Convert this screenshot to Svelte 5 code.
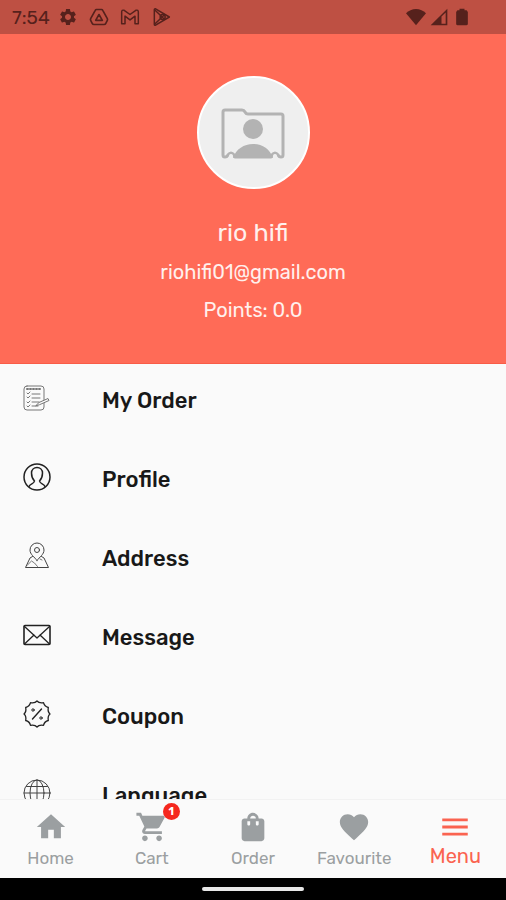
<script lang="ts">
  type Item = { id: string; label: string };

  const menu: Item[] = [
    { id: 'order', label: 'My Order' },
    { id: 'profile', label: 'Profile' },
    { id: 'address', label: 'Address' },
    { id: 'message', label: 'Message' },
    { id: 'coupon', label: 'Coupon' },
    { id: 'language', label: 'Language' },
  ];

  const tabs = [
    { label: 'Home', path: 'M10 20v-6h4v6h5v-8h3L12 3 2 12h3v8z' },
    {
      label: 'Cart',
      badge: 1,
      path: 'M7 18c-1.1 0-1.99.9-1.99 2S5.9 22 7 22s2-.9 2-2-.9-2-2-2zM1 2v2h2l3.6 7.59-1.35 2.45c-.16.28-.25.61-.25.96 0 1.1.9 2 2 2h12v-2H7.42c-.14 0-.25-.11-.25-.25l.03-.12.9-1.63h7.45c.75 0 1.41-.41 1.75-1.03l3.58-6.49c.08-.14.12-.31.12-.48 0-.55-.45-1-1-1H5.21l-.94-2H1zm16 16c-1.1 0-1.99.9-1.99 2s.89 2 1.99 2 2-.9 2-2-.9-2-2-2z',
    },
    {
      label: 'Order',
      path: 'M18 6h-2c0-2.21-1.79-4-4-4S8 3.79 8 6H6c-1.1 0-2 .9-2 2v12c0 1.1.9 2 2 2h12c1.1 0 2-.9 2-2V8c0-1.1-.9-2-2-2zm-8 4c0 .55-.45 1-1 1s-1-.45-1-1V8h2v2zm2-6c1.1 0 2 .9 2 2h-4c0-1.1.9-2 2-2zm4 6c0 .55-.45 1-1 1s-1-.45-1-1V8h2v2z',
    },
    {
      label: 'Favourite',
      path: 'M12 21.35l-1.45-1.32C5.4 15.36 2 12.28 2 8.5 2 5.42 4.42 3 7.5 3c1.74 0 3.41.81 4.5 2.09C13.09 3.81 14.76 3 16.5 3 19.58 3 22 5.42 22 8.5c0 3.78-3.4 6.86-8.55 11.54L12 21.35z',
    },
    { label: 'Menu', path: 'M3 18h18v-2H3v2zm0-5h18v-2H3v2zm0-7v2h18V6H3z' },
  ];

  let active = $state('Menu');
</script>

<div class="app">
  <div class="status">
    <span class="time">7:54</span>
    <div class="notifications">
      <svg class="status-icon" viewBox="0 0 24 24" fill="currentColor">
        <path d="M19.14 12.94c.04-.3.06-.61.06-.94 0-.32-.02-.64-.07-.94l2.03-1.58c.18-.14.23-.41.12-.61l-1.92-3.32c-.12-.22-.37-.29-.59-.22l-2.39.96c-.5-.38-1.03-.7-1.62-.94l-.36-2.54c-.04-.24-.24-.41-.48-.41h-3.84c-.24 0-.43.17-.47.41l-.36 2.54c-.59.24-1.13.57-1.62.94l-2.39-.96c-.22-.08-.47 0-.59.22L2.74 8.87c-.12.21-.08.47.12.61l2.03 1.58c-.05.3-.09.63-.09.94s.02.64.07.94l-2.03 1.58c-.18.14-.23.41-.12.61l1.92 3.32c.12.22.37.29.59.22l2.39-.96c.5.38 1.03.7 1.62.94l.36 2.54c.05.24.24.41.48.41h3.84c.24 0 .44-.17.47-.41l.36-2.54c.59-.24 1.13-.56 1.62-.94l2.39.96c.22.08.47 0 .59-.22l1.92-3.32c.12-.22.07-.47-.12-.61l-2.01-1.58zM12 15.6c-1.98 0-3.6-1.62-3.6-3.6s1.62-3.6 3.6-3.6 3.6 1.62 3.6 3.6-1.62 3.6-3.6 3.6z" />
      </svg>
      <svg class="status-icon" viewBox="0 0 24 24" fill="none" stroke="currentColor" stroke-width="2" stroke-linejoin="round">
        <path d="M9 3h6q1 0 1.500 1L22 14q.5 1 0 2l-2 4q-.5 1-2 1H6q-1.500 0-2-1l-2-4q-.5-1 0-2L7.500 4Q8 3 9 3z" />
        <path d="M12 9l4 7H8z" />
      </svg>
      <svg class="status-icon" viewBox="0 0 24 24" fill="none" stroke="currentColor" stroke-width="1.8" stroke-linejoin="round">
        <path d="M2 20V6q0-3 3-2l7 5 7-5q3-1 3 2v14h-4v-9l-6 4.500L6 11v9z" />
      </svg>
      <svg class="status-icon" viewBox="0 0 24 24" fill="none" stroke="currentColor" stroke-width="1.8" stroke-linejoin="round">
        <path d="M4 3q0-1 1-1l17 10L5 22q-1 0-1-1z" />
        <path d="M4 3l12.500 12M4 21L16.500 9" />
        <circle cx="14" cy="12" r="3" />
      </svg>
    </div>
    <div class="signals">
      <svg class="status-icon" viewBox="0 0 24 24" fill="currentColor">
        <path d="M12 22L0 7.500C3 4.500 7.500 2.500 12 2.500S21 4.500 24 7.500z" />
      </svg>
      <svg class="status-icon" viewBox="0 0 24 24" fill="currentColor">
        <path fill-rule="evenodd" d="M2 22L22 2v20zM15 11.500V20h5V6.500z" />
      </svg>
      <svg class="status-icon" viewBox="0 0 24 24" fill="currentColor">
        <path d="M9 2h6v2h2.500l1.500 2v15l-1.500 1h-11L5 21V6l1.500-2H9z" />
      </svg>
    </div>
  </div>

  <header class="account">
    <div class="avatar">
      <svg viewBox="0 0 64 52">
        <path d="M2 48V5q0-2 2-2h17q2 0 3 2t3 2h33q2 0 2 2v39q0 2-2 2-2 0-3-2-3-4-6 0l-1 2H14l-1-2q-3-4-6 0-1 2-3 2t-2-2z" fill="none" stroke="#b3b3b3" stroke-width="3" stroke-linejoin="round" />
        <circle cx="32" cy="22" r="10" fill="#b3b3b3" />
        <path d="M12 51c3-9 11-14 20-14s17 5 20 14z" fill="#b3b3b3" />
        <circle cx="10" cy="49" r="2" fill="#efefef" />
        <circle cx="54" cy="49" r="2" fill="#efefef" />
      </svg>
    </div>
    <h1>rio hifi</h1>
    <p>riohifi01@gmail.com</p>
    <p>Points: 0.0</p>
  </header>

  <main class="menu">
    {#each menu as item (item.id)}
      <a class="row" href="#{item.id}">
        <svg class="row-icon" viewBox="0 0 28 28" fill="none" stroke="#222" stroke-linejoin="round" stroke-linecap="round">
          {#if item.id === 'order'}
            <g stroke="#777">
              <rect x="1" y="2" width="20" height="24" rx="3" />
              <path d="M4 5h14" stroke-width="2" stroke-dasharray="1 2" />
              <path d="M9 10h8M9 14h8M9 18h7M9 22h6" />
              <path d="M4 9l1 1 2-2M4 13l1 1 2-2M4 18l1 1 2-2M4 22l1 1 2-2" />
              <path d="M13 21.500l3-3 9-4 1 2-9 4z" fill="#fafafa" />
            </g>
          {:else if item.id === 'profile'}
            <circle cx="14" cy="14" r="13" stroke-width="1.500" />
            <path d="M6 23.500c1-3 5-2.500 5.500-5.500-2-2-3-4.500-3-8 0-3.500 2.500-5.500 5.500-5.500s5.500 2 5.500 5.500c0 3.500-1 6-3 8 .5 3 4.500 2.500 5.500 5.500" stroke-width="1.500" />
          {:else if item.id === 'address'}
            <g stroke="#444">
              <path d="M14 18.500c-2.500-3.500-7-6-7-10.500a7 7 0 0 1 14 0c0 4.500-4.500 7-7 10.500z" />
              <circle cx="14" cy="8" r="2.500" />
              <path d="M9.500 14.500L7 16 2.500 25.500h23L21 16l-2.500-1.500" />
              <path d="M4.500 23l4-4 3 2 3 3.500M17 17l2 1" stroke="#777" />
            </g>
          {:else if item.id === 'message'}
            <rect x="1" y="4.500" width="26" height="19" rx="1" stroke-width="1.600" />
            <path d="M1.500 5.500L14 17 26.500 5.500M1.500 23l9.500-9M26.500 23L17 14" stroke-width="1.300" />
          {:else if item.id === 'coupon'}
            <path d="M14 1q2 2.500 6.500 1.700Q21.500 6.500 25.300 7.500 24.500 12 27 14q-2.500 2-1.700 6.500-3.800 1-4.800 4.800Q16 24.500 14 27q-2-2.500-6.500-1.700-1-3.800-4.800-4.800Q3.500 16 1 14q2.500-2 1.700-6.500 3.800-1 4.800-4.800Q12 3.500 14 1z" stroke-width="1.300" />
            <path d="M18.500 9L9.500 19" stroke-width="1.400" />
            <circle cx="10" cy="10" r="1.200" />
            <circle cx="18" cy="18" r="1.200" />
          {:else}
            <g stroke="#444">
              <circle cx="14" cy="14" r="13" />
              <ellipse cx="14" cy="14" rx="7" ry="13" />
              <path d="M14 1v26M1 14h26M3.500 7.500h21M3.500 20.500h21" />
            </g>
          {/if}
        </svg>
        <span>{item.label}</span>
      </a>
    {/each}
  </main>

  <nav class="tabs">
    {#each tabs as tab (tab.label)}
      <button
        type="button"
        class="tab"
        class:active={active === tab.label}
        onclick={() => (active = tab.label)}
      >
        <span class="tab-icon">
          <svg viewBox="0 0 24 24" fill="currentColor"><path d={tab.path} /></svg>
          {#if tab.badge}
            <span class="badge">{tab.badge}</span>
          {/if}
        </span>
        <span class="tab-label">{tab.label}</span>
      </button>
    {/each}
  </nav>

  <div class="gesture"><span class="pill"></span></div>
</div>

<style>
  :global(body) {
    margin: 0;
    background: #fafafa;
  }
  .app {
    height: 100vh;
    display: flex;
    flex-direction: column;
    background: #fafafa;
    font-family: 'Rubik', 'Roboto', sans-serif;
    color: #181818;
  }
  .status {
    flex: none;
    display: flex;
    align-items: center;
    gap: 8px;
    height: 34px;
    padding: 0 34px 0 12px;
    box-sizing: border-box;
    background: #be5043;
    color: #56211c;
  }
  .time {
    font-size: 19px;
  }
  .status-icon {
    display: block;
    width: 20px;
    height: 20px;
  }
  .notifications {
    display: flex;
    gap: 11px;
  }
  .signals {
    display: flex;
    gap: 3px;
    margin-left: auto;
  }
  .account {
    flex: none;
    display: flex;
    flex-direction: column;
    align-items: center;
    padding: 42px 16px 34px;
    background: #ff6b57;
    border-bottom: 1px solid #f95c47;
    color: #fff0ed;
  }
  .avatar {
    display: grid;
    place-items: center;
    width: 109px;
    height: 109px;
    border: 2px solid #fff;
    border-radius: 50%;
    background: #efefef;
  }
  .avatar svg {
    width: 64px;
    height: 52px;
  }
  h1 {
    margin: 25px 0 1px;
    font-size: 25px;
    font-weight: 400;
    line-height: 38px;
  }
  .account p {
    margin: 0;
    font-size: 20px;
    line-height: 38px;
  }
  .menu {
    flex: 1;
    min-height: 0;
    overflow-y: auto;
    scrollbar-width: none;
    display: flex;
    flex-direction: column;
    gap: 7px;
  }
  .row {
    flex: none;
    display: flex;
    align-items: center;
    gap: 51px;
    height: 72px;
    padding: 0 23px;
    color: inherit;
    font-size: 22px;
    font-weight: 500;
    text-decoration: none;
  }
  .row-icon {
    width: 28px;
    height: 28px;
    margin-bottom: 4px;
  }
  .tabs {
    flex: none;
    display: flex;
    height: 79px;
    border-top: 1px solid #f2f2f2;
    box-sizing: border-box;
  }
  .tab {
    flex: 1 1 0;
    min-width: 0;
    display: flex;
    flex-direction: column;
    align-items: center;
    gap: 4px;
    padding: 10px 0 0;
    border: 0;
    background: none;
    color: #9b9fa1;
    font-family: inherit;
    font-size: 17px;
    line-height: 20px;
    cursor: pointer;
  }
  .tab.active {
    gap: 2px;
    color: #fa6350;
    font-size: 20px;
  }
  .tab-icon {
    position: relative;
    height: 34px;
  }
  .tab-icon svg {
    display: block;
    width: 34px;
    height: 34px;
  }
  .badge {
    position: absolute;
    top: -7px;
    right: -11px;
    width: 17px;
    height: 17px;
    border-radius: 50%;
    background: #f5281e;
    color: #fff;
    font-size: 11px;
    font-weight: 700;
    line-height: 17px;
    text-align: center;
  }
  .gesture {
    flex: none;
    display: grid;
    place-items: center;
    height: 22px;
    background: #000;
  }
  .pill {
    width: 20%;
    height: 4px;
    border-radius: 2px;
    background: #e8e8e8;
  }
</style>
